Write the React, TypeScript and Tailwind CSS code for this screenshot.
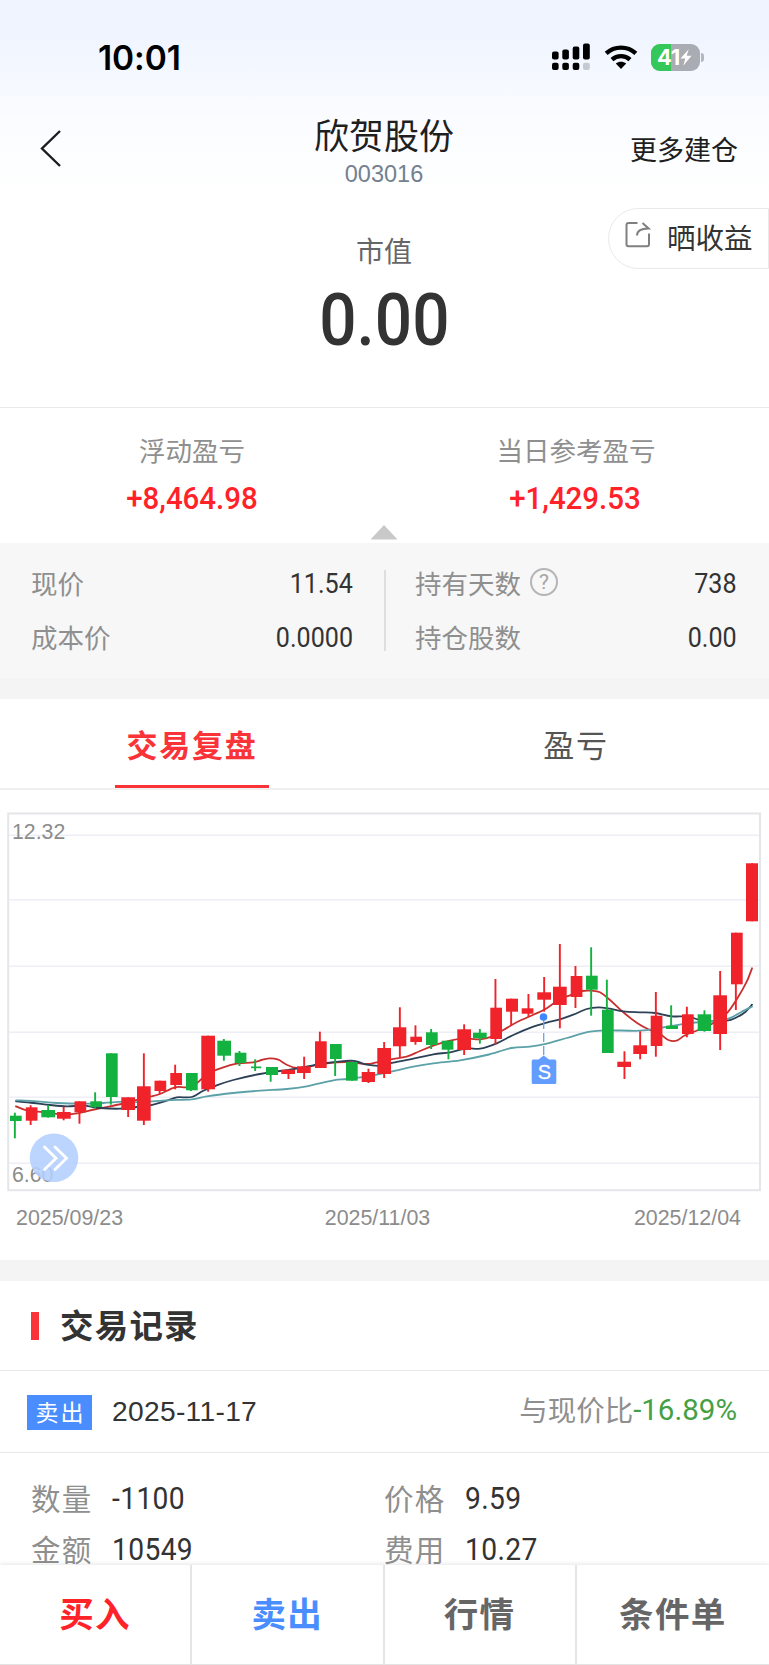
import React from 'react';

type Candle = {
  x: number; // wick
  bx: number; // body left
  w: number;
  top: number;
  bottom: number;
  high: number;
  low: number;
  up: boolean;
};

type Point = [number, number];

const RED = '#f0222a';
const GREEN = '#12b140';

const c = (x: number, bx: number, w: number, top: number, bottom: number, high: number, low: number, up = true): Candle => ({
  x, bx, w, top, bottom, high, low, up,
});

const candles: Candle[] = [
  c(14.7, 10, 11.7, 315.7, 321, 312.7, 338.3, false),
  c(30.5, 25.8, 11.7, 307.3, 320.7, 305.3, 325),
  c(48, 41.3, 13.7, 310, 317.3, 305, 317.7, false),
  c(63.5, 57, 13.7, 312, 318.7, 306.7, 320.3),
  c(79.3, 74.5, 11.7, 301.3, 312.3, 301.3, 323.7),
  c(95, 90.3, 11.7, 301.3, 307, 292.3, 308.5, false),
  c(110.7, 106, 11.7, 253.3, 297, 253.3, 304.7, false),
  c(128, 121.3, 13.7, 297.3, 310, 297.3, 317),
  c(143.7, 137, 13.7, 286.3, 320.7, 253.3, 325),
  c(159.5, 154.5, 11.7, 280.7, 291, 280.7, 294),
  c(175, 170.3, 11.7, 273, 285, 264.7, 289.3),
  c(190.7, 186, 11.7, 273, 290.3, 273, 291, false),
  c(208, 201.3, 13.7, 235.7, 289.3, 235.7, 291.7),
  c(223.7, 217.3, 13.7, 240.7, 255.7, 239, 260.7, false),
  c(239.3, 234.7, 11.7, 252.7, 263, 251, 266, false),
  c(255, 251, 10.3, 266.5, 268.2, 259.3, 271, false),
  c(270.5, 266, 12, 267, 275, 267, 281.7, false),
  c(288.3, 281.3, 13.7, 269.7, 274, 269.7, 279),
  c(304, 297, 13.7, 266.3, 273, 256.7, 279),
  c(319.7, 315, 11.7, 241.3, 268, 231.7, 268),
  c(335, 330, 11.7, 244, 259, 244, 276, false),
  c(352, 346, 11.7, 262, 280.7, 262, 280.7, false),
  c(368.3, 361.7, 13.3, 272, 282, 268.7, 283),
  c(384, 377.3, 13.7, 248, 274, 242, 278),
  c(399.7, 393, 13.3, 227.3, 246.3, 207.3, 257.3),
  c(415.3, 410.3, 11.7, 236.7, 242, 225.3, 244.7),
  c(431, 426, 11.7, 232.3, 245, 229, 249, false),
  c(448.3, 441.7, 11.7, 240.7, 249.7, 240.7, 259.3, false),
  c(464, 457.3, 13.7, 229.3, 250, 224.3, 255),
  c(479.7, 473, 13.7, 232.7, 238.3, 229, 243.7, false),
  c(495.3, 490.3, 11.7, 207.7, 239, 179, 244.3),
  c(511, 506, 12, 198.7, 211.7, 198.7, 225.7),
  c(528.3, 521.7, 11.7, 208.3, 213.7, 194, 217.3),
  c(544, 537.3, 13.7, 192.3, 199.7, 177, 211.7),
  c(559.7, 553, 13.7, 186.7, 205, 144, 228.3),
  c(575.3, 570.7, 11.7, 176, 197, 166, 208),
  c(591, 586, 11.7, 175.7, 189.7, 147.3, 215.7, false),
  c(606.7, 602, 11.7, 209.7, 253, 179.7, 253, false),
  c(624.3, 617.3, 13.7, 261.7, 267, 251.3, 279),
  c(640, 633.3, 13.7, 245.3, 254, 231.3, 259.3),
  c(655.7, 650.7, 11.7, 215.7, 246, 192, 256.7),
  c(671, 666, 12, 225.7, 229, 205.3, 229, false),
  c(686.7, 682, 11.7, 214.3, 234, 206.7, 237.3),
  c(704.3, 697.7, 13.3, 214.3, 231, 210.3, 231.7, false),
  c(720, 713.3, 13.7, 195.3, 234, 171, 250),
  c(735.7, 731, 11.7, 132.7, 184.3, 132.7, 210),
  c(752, 746, 12, 63.3, 121.3, 63.3, 121.3),
];

const maShort: Point[] = [
  [16, 306.3], [26.7, 310.3], [43.3, 312.3], [63.3, 314.7], [75, 313.7], [96.7, 309], [121.3, 304], [133.3, 300.7],
  [150, 296.7], [160, 294], [175, 287.3], [186.7, 287.3], [196.7, 283.3], [206.7, 274.3], [215, 270.3], [233.3, 264.3],
  [253.3, 262.3], [261.7, 260], [270, 258.3], [278.3, 259.7], [286.7, 264.7], [296.7, 268], [310, 266.3], [326.7, 263.3],
  [346.7, 262], [366.7, 264], [376.7, 262.3], [391, 259.3], [406.7, 256.7], [420, 251], [433.3, 245.7], [450, 240.7],
  [463.3, 238.3], [480, 239.3], [491.7, 236.7], [503.3, 230], [516.7, 222.3], [533.3, 214.7], [545, 209.3], [560, 199],
  [570, 195.3], [582, 191], [591.7, 190.7], [600, 192.3], [610, 200], [623.3, 212.3], [636.7, 222.7], [648.3, 229.3],
  [660, 234], [668.3, 240], [676.7, 240.7], [685, 235.3], [698.3, 230], [711.7, 224], [726.7, 213.3], [738.3, 196.7],
  [746.7, 181.7], [752, 168.3],
];

const maMid: Point[] = [
  [16, 301.3], [33.3, 303], [50, 305], [66.7, 306.3], [83.3, 305.7], [100, 308], [120, 308.7], [136.7, 307],
  [153.3, 304.7], [166.7, 300.7], [176.7, 297.3], [191.7, 297], [203.3, 290.7], [216.7, 285.3], [233.3, 280], [260, 274],
  [280, 271], [296.7, 268.7], [313.3, 265.3], [326.7, 263], [350, 260.7], [358.3, 262], [366.7, 264.7], [380, 265.7],
  [393.3, 262.7], [413.3, 258.7], [433.3, 254.3], [450, 252.3], [466.7, 248.3], [480, 248.7], [496.7, 243.3], [513.3, 235],
  [533.3, 226.7], [546.7, 222.7], [560, 219.3], [573.3, 214.7], [586.7, 209], [598.3, 207.3], [610, 208.7], [623.3, 211.3],
  [640, 212.3], [655, 213], [671.7, 216.3], [688.3, 216.7], [703.3, 220.7], [726.7, 220.7], [736.7, 217.3], [745, 212.3],
  [752, 204.7],
];

const maLong: Point[] = [
  [16, 300.3], [36.7, 301.3], [56.7, 303], [83.3, 303.7], [103.3, 303], [123.3, 301.7], [143.3, 302], [166.7, 300.3],
  [191.7, 299.3], [206.7, 296.3], [233.3, 293], [260, 290.7], [286.7, 289], [306.7, 286.3], [333.3, 280.3], [346.7, 279],
  [366.7, 276.7], [386.7, 272.7], [413.3, 266.7], [433.3, 263.3], [460, 260.3], [486.7, 255], [511.7, 248], [530, 246.7],
  [546.7, 243.7], [566.7, 238], [590, 231.7], [606.7, 230.3], [640, 230.7], [660, 228], [686.7, 223.3], [703.3, 222],
  [720, 221], [731.7, 217.3], [741.7, 211.7], [752, 206.7],
];

const gridLines = [35.3, 99.7, 166.3, 232.3, 297.3, 363.3];

// Catmull-Rom spline through the points
const smooth = (pts: Point[]) => {
  let d = `M${pts[0][0]} ${pts[0][1]}`;
  for (let i = 0; i < pts.length - 1; i++) {
    const p0 = pts[i - 1] || pts[i];
    const p1 = pts[i];
    const p2 = pts[i + 1];
    const p3 = pts[i + 2] || p2;
    d += `C${p1[0] + (p2[0] - p0[0]) / 6} ${p1[1] + (p2[1] - p0[1]) / 6} ${p2[0] - (p3[0] - p1[0]) / 6} ${p2[1] - (p3[1] - p1[1]) / 6} ${p2[0]} ${p2[1]}`;
  }
  return d;
};

const StatusBar = () => (
  <div className="flex h-[114px] items-center justify-between pl-[98px] pr-[65px]">
    <span className="mt-[3px] font-['Inter'] text-[33.5px] font-semibold leading-none tracking-[-0.1px] text-black">10:01</span>
    <div className="flex items-center">
      <svg width="38" height="28" viewBox="0 0 38 28">
        <rect x="0" y="8.5" width="6.6" height="8" rx="2" />
        <rect x="10.3" y="6.5" width="6.6" height="10" rx="2" />
        <rect x="20.7" y="3.5" width="6.6" height="13" rx="2" />
        <rect x="31" y="0.5" width="6.8" height="16" rx="2" />
        <rect x="0" y="19.7" width="6.6" height="7.3" rx="2" />
        <rect x="10.3" y="19.7" width="6.6" height="7.3" rx="2" />
        <rect x="20.7" y="19.7" width="6.6" height="7.3" rx="2" />
        <rect x="31" y="19.7" width="6.8" height="7.3" rx="2" fill="#c5c9d0" />
      </svg>
      <svg width="34" height="26" viewBox="0 0 34 26" className="ml-[14px]" fill="none" stroke="#000" strokeWidth="4.3">
        <path d="M2.2 9.4C10.4 1.6 23.6 1.6 31.8 9.4" />
        <path d="M8 15.6C13 11 21 11 26 15.6" />
        <path d="M11.8 19.6C14.9 17.1 19.1 17.1 22.2 19.6L17 24.9Z" fill="#000" stroke="none" />
      </svg>
      <div className="relative ml-[13px] flex h-[27px] w-[49px] items-center overflow-hidden rounded-[9px] bg-[#a9acb2] pl-[6px]">
        <div className="absolute inset-y-0 left-0 w-[20px] bg-[#34c759]"></div>
        <span className="relative font-['Inter'] text-[22px] font-bold leading-none tracking-[-0.4px] text-white">41</span>
        <svg width="12" height="17" viewBox="0 0 13 18" className="relative mt-[1px]" fill="#fff">
          <path d="M9.5 0L0.5 10.2H5.8L3.5 18L12.5 7.2H7.2Z" />
        </svg>
      </div>
      <div className="ml-[1px] h-[9px] w-[3px] rounded-r-full bg-[#b4b7bc]"></div>
    </div>
  </div>
);

const Header = () => (
  <div className="relative flex h-[84px] items-start justify-center">
    <svg width="22" height="38" viewBox="0 0 22 38" className="absolute left-[39px] top-[15px]" fill="none" stroke="#1c1c1c" strokeWidth="2.4">
      <path d="M21 2L3 19.5L21 37" />
    </svg>
    <div className="flex flex-col items-center pr-[1px]">
      <h1 className="text-[35px] leading-[40px] text-[#1f1f1f]">欣贺股份</h1>
      <span className="mt-[6px] font-['Liberation_Sans'] text-[23.5px] leading-[28px] text-[#73818f]">003016</span>
    </div>
    <span className="absolute right-[31px] top-[17px] text-[27px] leading-[36px] text-[#1f1f1f]">更多建仓</span>
  </div>
);

const Summary = () => (
  <section className="relative">
    <div className="absolute right-0 top-[10px] flex h-[61px] w-[161px] items-center rounded-l-full border border-[#e9e9e9] bg-white pl-[16px]">
      <svg width="26" height="27" viewBox="0 0 26 27" className="-mt-[8px]" fill="none" stroke="#808080" strokeWidth="2">
        <path d="M12.5 2H3.5Q1.5 2 1.5 4V23.3Q1.5 25.3 3.5 25.3H22Q24 25.3 24 23.3V12.5" />
        <path d="M12 14.5C12 10 15 7.4 23.5 7.4L17.5 2" />
      </svg>
      <span className="-mt-[3px] ml-[16px] text-[28.5px] leading-none text-[#333]">晒收益</span>
    </div>
    <div className="flex h-[209px] flex-col items-center pr-[1px]">
      <span className="mt-[35px] text-[28px] leading-[34px] text-[#666]">市值</span>
      <span className="mt-[13px] scale-x-[0.9] font-['Roboto'] text-[73px] font-medium leading-[80px] text-[#333]">0.00</span>
    </div>
    <div className="grid h-[136px] grid-cols-2 border-t border-[#e8e8e8] pr-[1px] text-center">
      <div>
        <p className="mt-[23px] text-[26.5px] leading-[38px] text-[#8f8f8f]">浮动盈亏</p>
        <p className="mt-[11px] scale-x-[0.95] font-['Roboto'] text-[31px] font-medium leading-[38px] text-[#ff2228]">+8,464.98</p>
      </div>
      <div>
        <p className="mt-[23px] text-[26.5px] leading-[38px] text-[#8f8f8f]">当日参考盈亏</p>
        <p className="-ml-[2px] mt-[11px] scale-x-[0.95] font-['Roboto'] text-[31px] font-medium leading-[38px] text-[#ff2228]">+1,429.53</p>
      </div>
    </div>
    <svg width="28" height="15" viewBox="0 0 28 15" className="absolute bottom-[3px] left-[370px]">
      <path d="M14 0L27.5 14.6H0.5Z" fill="#c9c9c9" />
    </svg>
  </section>
);

const DetailRow = ({ label, value, help }: { label: string; value: string; help?: boolean }) => (
  <div className="flex h-[54px] items-center justify-between">
    <span className="-mt-[1px] flex items-center text-[26.5px] text-[#8f8f8f]">
      {label}
      {help && (
        <span className="-mt-[1px] ml-[9px] flex h-[28px] w-[28px] items-center justify-center rounded-full border-2 border-[#b5b5b5] font-['Roboto'] text-[21px] leading-none text-[#a5a5a5]">
          ?
        </span>
      )}
    </span>
    <span className="mt-[3px] origin-right scale-x-[0.93] font-['Roboto'] text-[27px] text-[#333]">{value}</span>
  </div>
);

const Details = () => (
  <section className="flex h-[135px] bg-[#f7f7f7] pt-[13px]">
    <div className="w-[384px] pl-[31px] pr-[31px]">
      <DetailRow label="现价" value="11.54" />
      <DetailRow label="成本价" value="0.0000" />
    </div>
    <div className="mt-[14px] h-[81px] w-[2px] bg-[#dedede]"></div>
    <div className="flex-1 pl-[29px] pr-[32px]">
      <DetailRow label="持有天数" value="738" help />
      <DetailRow label="持仓股数" value="0.00" />
    </div>
  </section>
);

const Tabs = () => (
  <div className="mt-[1px] grid h-[90px] grid-cols-2 border-b-2 border-[#f0f0f0] pr-[1px] text-center text-[31px] leading-[88px] tracking-[1.8px]">
    <div className="relative font-bold text-[#f93338]">
      交易复盘
      <div className="absolute bottom-0 left-[115px] h-[3px] w-[154px] bg-[#f93338]"></div>
    </div>
    <div className="text-[#555]">盈亏</div>
  </div>
);

const Chart = () => (
  <section className="h-[450px]">
    <svg width="769" height="391" viewBox="0 10 769 391" className="block font-['Liberation_Sans']">
      <rect x="8.2" y="13.5" width="751.8" height="376.7" fill="#fff" stroke="#e5e6ea" strokeWidth="2" />
      {gridLines.map((y) => (
        <line key={y} x1="9" x2="759" y1={y} y2={y} stroke="#eeeef6" strokeWidth="1.4" />
      ))}
      <text x="12" y="39" fontSize="21.3" fill="#8c8c8c">12.32</text>
      <text x="12" y="381.5" fontSize="21.3" fill="#8c8c8c">6.60</text>
      <g fill="none" strokeWidth="1.8" strokeLinecap="round">
        <path d={smooth(maShort)} stroke="#c8302f" />
        <path d={smooth(maMid)} stroke="#2c4156" />
        <path d={smooth(maLong)} stroke="#5ca1a8" />
      </g>
      {candles.map((k) => (
        <g key={k.x} fill={k.up ? RED : GREEN}>
          <rect x={k.x - 0.8} y={k.high} width="1.9" height={k.low - k.high} />
          <rect x={k.bx} y={k.top} width={k.w} height={k.bottom - k.top} />
        </g>
      ))}
      {/* sell marker */}
      <line x1="543.7" x2="543.7" y1="220" y2="257" stroke="#6ca0f5" strokeWidth="1.3" strokeDasharray="9 4" />
      <circle cx="543.5" cy="217" r="3.8" fill="#3f87ff" />
      <path d="M533 259.5H538.5L543.7 255.5L549 259.5H555Q556.3 259.5 556.3 261V282.5Q556.3 284 555 284H533Q531.7 284 531.7 282.5V261Q531.7 259.5 533 259.5Z" fill="#629cff" />
      <text x="544.3" y="279.3" fontSize="20" fill="#fff" stroke="#fff" strokeWidth="0.3" textAnchor="middle">S</text>
      {/* expand button */}
      <circle cx="54" cy="357.7" r="24.3" fill="#b3cfff" fillOpacity="0.88" />
      <path d="M44.5 347L56 358.3L44.5 369.5M55 347L66.5 358.3L55 369.5" fill="none" stroke="#fff" strokeWidth="2.8" strokeLinecap="round" />
    </svg>
    <div className="flex justify-between pl-[16px] pr-[28px] pt-[2px] font-['Liberation_Sans'] text-[21.4px] leading-[30px] text-[#8c8c8c]">
      <span>2025/09/23</span>
      <span className="mr-[2px]">2025/11/03</span>
      <span>2025/12/04</span>
    </div>
  </section>
);

const Record = ({ label, value }: { label: string; value: string }) => (
  <div className="flex h-[51px] items-center">
    <span className="-mt-[5px] w-[81px] text-[29.5px] tracking-[1.3px] text-[#8f8f8f]">{label}</span>
    <span className="origin-left scale-x-[0.91] font-['Roboto'] text-[31px] tracking-[0.4px] text-[#333]">{value}</span>
  </div>
);

const Records = () => (
  <section>
    <div className="flex h-[90px] items-center border-b border-[#e8e8e8] pl-[31px]">
      <div className="h-[28px] w-[8px] bg-[#f93338]"></div>
      <h2 className="-mt-[2px] ml-[21px] text-[33.5px] font-bold tracking-[1.2px] text-[#333]">交易记录</h2>
    </div>
    <div className="flex h-[82px] items-center border-b border-[#e8e8e8] pl-[27px] pr-[32px]">
      <span className="mt-[1px] flex h-[35px] w-[65px] items-center justify-center bg-[#4a8dff] pb-[2px] pl-[2px] text-[23px] leading-none tracking-[2px] text-white">卖出</span>
      <span className="ml-[20px] font-['Liberation_Sans'] text-[28.2px] tracking-[0.3px] text-[#333]">2025-11-17</span>
      <span className="-mt-[5px] ml-auto flex items-center text-[28.5px] text-[#8f8f8f]">
        与现价比
        <span className="mt-[3px] font-['Roboto'] text-[29.5px] text-[#45a045]">-16.89%</span>
      </span>
    </div>
    <div className="grid grid-cols-[353px_1fr] pl-[31px] pt-[21px]">
      <Record label="数量" value="-1100" />
      <Record label="价格" value="9.59" />
      <Record label="金额" value="10549" />
      <Record label="费用" value="10.27" />
    </div>
  </section>
);

const actions = [
  { label: '买入', color: 'text-[#ff2228]' },
  { label: '卖出', color: 'text-[#4a8dff]' },
  { label: '行情', color: 'text-[#666]' },
  { label: '条件单', color: 'text-[#666]' },
];

const App = () => {
  return (
    <div className="flex h-[1665px] w-[769px] flex-col overflow-hidden bg-white font-['Noto_Sans_CJK_SC',sans-serif]">
      <main className="min-h-0 flex-1 overflow-hidden">
        <div className="bg-linear-to-b from-[#eff4ff] from-15% via-[#fafcff] via-60% to-white">
          <StatusBar />
          <Header />
        </div>
        <Summary />
        <Details />
        <div className="h-[21px] bg-[#f4f4f4]"></div>
        <Tabs />
        <div className="h-[20px]"></div>
        <Chart />
        <div className="h-[21px] bg-[#f4f4f4]"></div>
        <Records />
      </main>
      <footer className="relative grid h-[100px] grid-cols-4 border-b border-[#e3e3e3] bg-white text-center shadow-[0_-1px_4px_rgba(0,0,0,0.1)]">
        {actions.map((a) => (
          <button key={a.label} className={`border-r-2 border-[#e5e5e5] pb-[3px] text-[34.5px] font-bold tracking-[1.4px] last:border-r-0 ${a.color}`}>
            {a.label}
          </button>
        ))}
      </footer>
    </div>
  );
};

export default App;
